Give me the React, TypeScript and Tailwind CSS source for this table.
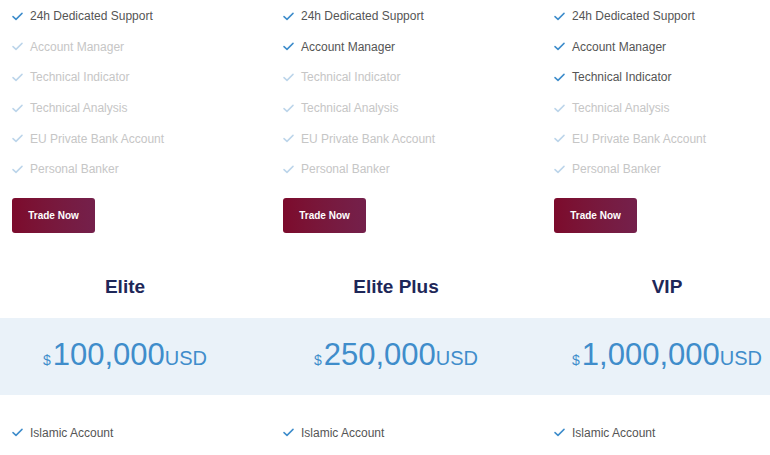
import React from "react";

// Plan comparison strip: feature lists of the upper row, then the next row's titles and prices.
const FEATURES = [
  "24h Dedicated Support",
  "Account Manager",
  "Technical Indicator",
  "Technical Analysis",
  "EU Private Bank Account",
  "Personal Banker",
];

const UPPER: number[] = [1, 2, 3]; // how many features each plan includes

const LOWER = [
  { name: "Elite", amount: "100,000" },
  { name: "Elite Plus", amount: "250,000" },
  { name: "VIP", amount: "1,000,000" },
];

function Check({ on }: { on: boolean }) {
  return (
    <svg width="11" height="9" viewBox="0 0 11 9" className="shrink-0">
      <polyline
        points="1,4.6 4,7.4 10,1.4"
        fill="none"
        stroke={on ? "#3d8ccb" : "#bcd5ea"}
        strokeWidth="1.5"
        strokeLinecap="round"
        strokeLinejoin="round"
      />
    </svg>
  );
}

function Feature({ label, on }: { label: string; on: boolean }) {
  return (
    <li className="flex h-[30.6px] items-center gap-[7px] pl-[12px]">
      <Check on={on} />
      <span className={on ? "text-[12px] text-[#555555]" : "text-[12px] text-[#c6c6c6]"}>{label}</span>
    </li>
  );
}

export default function App() {
  return (
    <div className="h-[455px] w-[770px] overflow-hidden bg-white font-['Liberation_Sans',Arial,sans-serif]">
      {/* upper plans (tail of the card) */}
      <div className="grid grid-cols-[250px_250px_250px] gap-x-[21px] pt-[1px]">
        {UPPER.map((n, i) => (
          <div key={i}>
            <ul>
              {FEATURES.map((f, j) => (
                <Feature key={f} label={f} on={j < n} />
              ))}
            </ul>
            <button className="ml-[12px] mt-[13px] flex h-[35px] w-[83px] items-center justify-center rounded-[3px] bg-gradient-to-r from-[#7c0a2c] to-[#74204b] text-[10px] font-bold text-white">
              Trade Now
            </button>
          </div>
        ))}
      </div>

      {/* lower plans: titles */}
      <div className="mt-[42px] grid grid-cols-[250px_250px_250px] gap-x-[21px]">
        {LOWER.map((p) => (
          <h3 key={p.name} className="text-center text-[19px] font-bold leading-[24px] text-[#1e2758]">
            {p.name}
          </h3>
        ))}
      </div>

      {/* price band */}
      <div className="mt-[19px] grid h-[77px] grid-cols-[250px_250px_250px] items-center gap-x-[21px] bg-[#eaf2f9]">
        {LOWER.map((p) => (
          <div key={p.name} className="flex items-baseline justify-center text-[#3f8dcb]">
            <span className="mr-[2px] text-[14px]">$</span>
            <span className="text-[31px] leading-none">{p.amount}</span>
            <span className="text-[20px]">USD</span>
          </div>
        ))}
      </div>

      <div className="mt-[23px] grid grid-cols-[250px_250px_250px] gap-x-[21px]">
        {LOWER.map((p) => (
          <ul key={p.name}>
            <Feature label="Islamic Account" on />
          </ul>
        ))}
      </div>
    </div>
  );
}
